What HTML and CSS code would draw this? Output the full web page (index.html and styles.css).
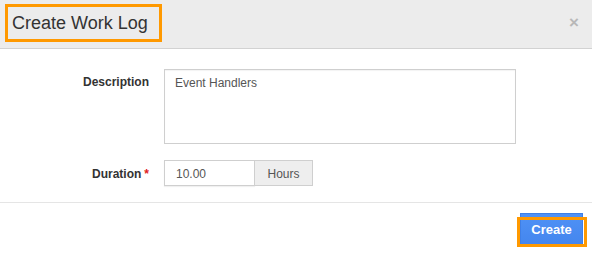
FILE: index.html
```html
<!DOCTYPE html>
<html>
<head>
<meta charset="utf-8">
<link rel="stylesheet" href="styles.css">
</head>
<body>
<div class="modal">
  <div class="modal-header">
    <h4 class="modal-title">Create Work Log</h4>
    <span class="close">×</span>
  </div>
  <div class="modal-body">
    <div class="form-row top">
      <label class="form-label desc">Description</label>
      <div class="textarea">Event Handlers</div>
    </div>
    <div class="form-row mid">
      <label class="form-label dur">Duration<span class="req">*</span></label>
      <div class="input-group">
        <div class="input">10.00</div>
        <div class="addon">Hours</div>
      </div>
    </div>
  </div>
  <div class="modal-footer">
    <div class="btn-wrap">
      <button class="btn-primary">Create</button>
      <span class="annot"></span>
    </div>
  </div>
</div>
</body>
</html>
```
FILE: styles.css
```css
* { box-sizing: border-box; }
html, body { margin: 0; padding: 0; background: #fff; }
body {
  font-family: "Liberation Sans", Arial, sans-serif;
  font-size: 12px;
  color: #333;
  width: 592px;
  height: 253px;
  overflow: hidden;
}
.modal-header {
  height: 49px;
  background: #ececec;
  border-bottom: 1px solid #d2d2d2;
  display: flex;
  justify-content: space-between;
  align-items: flex-start;
}
.modal-title {
  margin: 4px 0 0 5px;
  border: 3px solid #ff9900;
  padding: 0 11px 0 4px;
  height: 38px;
  line-height: 32px;
  font-size: 18px;
  font-weight: normal;
  color: #333;
}
.close {
  margin: 14px 13px 0 0;
  font-size: 17px;
  font-weight: bold;
  line-height: 1;
  color: #b8b8b8;
}
.modal-body {
  padding: 20px 0 16px 0;
  border-bottom: 1px solid #e5e5e5;
}
.form-row {
  display: grid;
  grid-template-columns: 149px auto;
  column-gap: 15px;
}
.form-row.top { align-items: start; }
.form-row.mid { align-items: center; margin-top: 16px; }
.form-label {
  text-align: right;
  font-weight: bold;
  line-height: 17px;
}
.form-label.desc { padding-top: 5px; }
.form-label.dur { padding-top: 2px; }
.req { color: #e02020; margin-left: 3px; }
.textarea {
  width: 352px;
  height: 75px;
  border: 1px solid #cfcfcf;
  padding: 5px 10px 4px;
  line-height: 17px;
  color: #555;
  box-shadow: inset 0 1px 1px rgba(0,0,0,.05);
}
.input-group { display: flex; }
.input {
  width: 91px;
  height: 26px;
  border: 1px solid #cfcfcf;
  padding: 1px 11px 0;
  line-height: 24px;
  color: #555;
  box-shadow: 0 1px 1px rgba(0,0,0,.06);
}
.addon {
  width: 58px;
  height: 26px;
  border: 1px solid #cfcfcf;
  border-left: none;
  background: #eeeeee;
  text-align: center;
  padding-top: 1px;
  line-height: 24px;
  color: #555;
}
.modal-footer {
  display: flex;
  justify-content: flex-end;
  padding: 10px 9px 0 0;
}
.btn-wrap { position: relative; }
.btn-primary {
  display: block;
  width: 63px;
  height: 32px;
  padding: 0;
  border: 1px solid #3f7fe6;
  background: linear-gradient(#4f92f6, #4486ee);
  color: #fff;
  font-family: "Liberation Sans", Arial, sans-serif;
  font-weight: bold;
  font-size: 13px;
}
.annot {
  position: absolute;
  left: -3px;
  top: 4px;
  width: 70px;
  height: 30px;
  border: 3px solid #ff9900;
}
```
